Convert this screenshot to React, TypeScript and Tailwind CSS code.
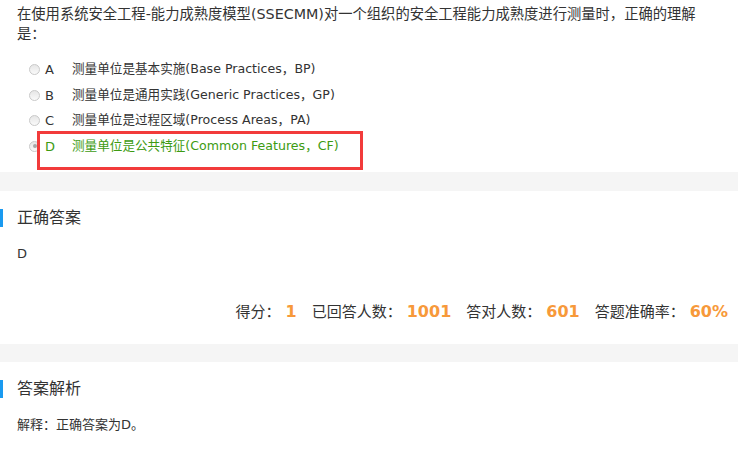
import React from 'react'

const options = [
  { key: 'A', text: '测量单位是基本实施(Base Practices，BP)' },
  { key: 'B', text: '测量单位是通用实践(Generic Practices，GP)' },
  { key: 'C', text: '测量单位是过程区域(Process Areas，PA)' },
  { key: 'D', text: '测量单位是公共特征(Common Features，CF)', correct: true },
]

const Radio = ({ checked }: { checked?: boolean }) => (
  <span className="w-[11px] h-[11px] rounded-full border border-[#c9c9c9] bg-gradient-to-b from-[#e6e6e6] to-[#fafafa] flex items-center justify-center">
    {checked && <span className="w-[4px] h-[4px] rounded-full bg-[#a8a8a8]" />}
  </span>
)

const SectionTitle = ({ children }: { children: React.ReactNode }) => (
  <div className="h-[18px] flex items-center border-l-[3px] border-[#1a9af0] pl-[14px] text-[16px] text-[#333]">
    {children}
  </div>
)

const App = () => {
  return (
    <div className="w-[738px] h-[451px] bg-white text-[#333] overflow-hidden font-['DejaVu_Sans','Noto_Sans_CJK_SC',sans-serif]">
      <div className="pt-[4px] pl-[17px] pr-[28px] text-[14.3px] leading-[20px]">
        在使用系统安全工程-能力成熟度模型(SSECMM)对一个组织的安全工程能力成熟度进行测量时，正确的理解是：
      </div>

      <ul className="mt-[13px] pb-[13px]">
        {options.map((o) => (
          <li key={o.key} className="relative h-[25.5px] flex items-center pl-[29px] text-[12.6px]">
            <Radio checked={o.correct} />
            <span className={`ml-[5px] w-[27px] text-[13px] ${o.correct ? 'text-[#3d9b12]' : ''}`}>{o.key}</span>
            <span className={o.correct ? 'text-[#3d9b12]' : ''}>{o.text}</span>
            {o.correct && (
              <span className="absolute left-[37px] top-[-2.5px] w-[326px] h-[39px] border-[3px] border-[#f23b3b]" />
            )}
          </li>
        ))}
      </ul>

      <div className="h-[19px] bg-[#f5f5f5]" />

      <section className="pt-[18px] pb-[20px]">
        <SectionTitle>正确答案</SectionTitle>
        <div className="mt-[17px] pl-[17px] text-[13px] leading-[20px]">D</div>
        <div className="mt-[36px] h-[24px] flex items-center justify-end pr-[10px] text-[15px]">
          <span>得分：</span>
          <span className="ml-[5px] mr-[15px] font-bold text-[16px] text-[#f7993a]">1</span>
          <span>已回答人数：</span>
          <span className="ml-[5px] mr-[15px] font-bold text-[16px] text-[#f7993a]">1001</span>
          <span>答对人数：</span>
          <span className="ml-[5px] mr-[15px] font-bold text-[16px] text-[#f7993a]">601</span>
          <span>答题准确率：</span>
          <span className="ml-[5px] font-bold text-[16px] text-[#f7993a]">60%</span>
        </div>
      </section>

      <div className="h-[18px] bg-[#f5f5f5]" />

      <section className="pt-[18px]">
        <SectionTitle>答案解析</SectionTitle>
        <div className="mt-[17px] pl-[17px] text-[13px] leading-[20px]">解释：正确答案为D。</div>
      </section>
    </div>
  )
}

export default App
